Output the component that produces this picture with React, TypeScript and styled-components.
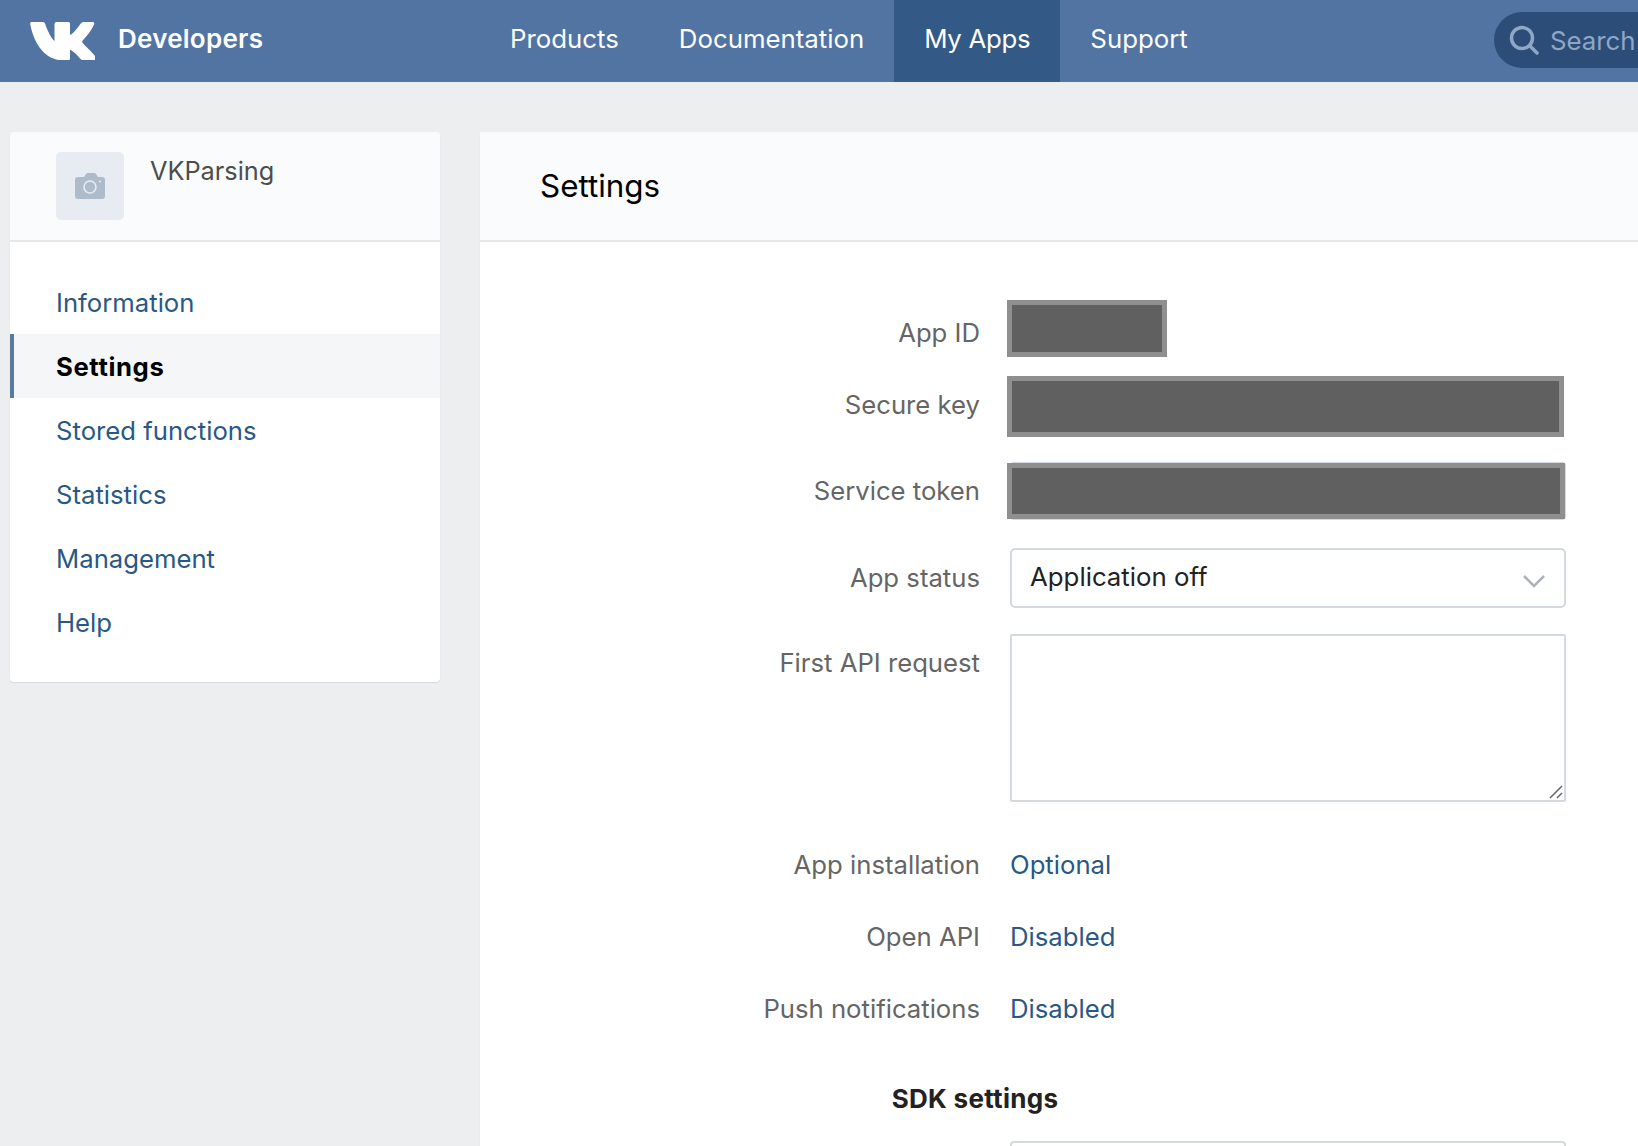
import React from "react";
import styled, { createGlobalStyle } from "styled-components";

const GlobalStyle = createGlobalStyle`
  html, body {
    margin: 0;
    padding: 0;
    height: 1146px;
    overflow: hidden;
    background: #edeef0;
    font-family: "Inter", "Liberation Sans", sans-serif;
  }
`;

const menuItems = ["Information", "Settings", "Stored functions", "Statistics", "Management", "Help"];
const navItems = ["Products", "Documentation", "My Apps", "Support"];

const App = () => {
  return (
    <Page>
      <GlobalStyle />
      <TopBar>
        <Brand>
          <svg width="65" height="38" viewBox="0 0 65 38" fill="#ffffff">
            <path d="M1.500 0h11.500q1.500 0 2 1.500c3 9 7 15.500 9.500 17.500V2q0-2 2-2h12q1.500 0 1.500 1.500V13c2.500-.5 8-7.500 10.800-11.500q1-1.500 2.700-1.500h9.200q2 0 1.500 2c-1.500 5-9 14-11.500 16.500q-1 1.200 0 2.500c2 2.500 10 9.500 13 14q1.500 3-1.500 3.500H54q-2 0-3.500-1.500c-3-3.500-7-7.800-10.500-9.500v9q0 1.800-2 2h-5C15 38 4 22 .3 2.500 0 1 .5 0 1.500 0z" />
          </svg>
          <BrandName>Developers</BrandName>
        </Brand>
        {navItems.map((item) => (
          <NavItem key={item} $active={item === "My Apps"}>
            {item}
          </NavItem>
        ))}
        <SearchBox>
          <svg width="30" height="30" viewBox="0 0 30 30" fill="none" stroke="#8fa7c6" strokeWidth="3.500" strokeLinecap="round">
            <circle cx="13" cy="13" r="10.500" />
            <path d="M21 21l7 7" />
          </svg>
          <span>Search</span>
        </SearchBox>
      </TopBar>

      <Content>
        <Sidebar>
          <AppHead>
            <Avatar>
              <svg width="30" height="26" viewBox="0 0 30 26">
                <path
                  fill="#aebbca"
                  d="M3 4h6l2-3q.5-1 2-1h6q1.500 0 2 1l2 3h4q3 0 3 3v16q0 3-3 3H3q-3 0-3-3V7q0-3 3-3z"
                />
                <circle cx="15" cy="14" r="6" fill="none" stroke="#e7ecf2" strokeWidth="1.600" />
                <circle cx="25" cy="8.500" r="1" fill="#e7ecf2" />
              </svg>
            </Avatar>
            <AppName>VKParsing</AppName>
          </AppHead>
          <Menu>
            {menuItems.map((item) => (
              <MenuItem key={item} $active={item === "Settings"}>
                {item}
              </MenuItem>
            ))}
          </Menu>
        </Sidebar>

        <Panel>
          <PanelHead>Settings</PanelHead>
          <Form>
            <Row $height={30}>
              <Label>App ID</Label>
              <Field>
                <Redacted $top={-18} $width={160} $height={57} />
              </Field>
            </Row>
            <Row>
              <Label>Secure key</Label>
              <Field>
                <Redacted $top={0} $width={557} $height={61} />
              </Field>
            </Row>
            <Row>
              <Label>Service token</Label>
              <Field>
                <Input />
                <Redacted $top={1} $width={558} $height={56} />
              </Field>
            </Row>
            <Row>
              <Label>App status</Label>
              <Field>
                <SelectBox>
                  Application off
                  <Chevron width="24" height="14" viewBox="0 0 24 14" fill="none" stroke="#aeb3b9" strokeWidth="2.500">
                    <path d="M2 2l10 10L22 2" />
                  </Chevron>
                </SelectBox>
              </Field>
            </Row>
            <Row $height={168} $after={41} $top>
              <Label $tall>First API request</Label>
              <Field>
                <TextArea readOnly />
                <Grip width="14" height="14" viewBox="0 0 14 14" stroke="#666" strokeWidth="1.500">
                  <path d="M1 13L13 1M8 13l5-5" />
                </Grip>
              </Field>
            </Row>
            <Row $height={44}>
              <Label>App installation</Label>
              <ValueLink>Optional</ValueLink>
            </Row>
            <Row $height={44}>
              <Label>Open API</Label>
              <ValueLink>Disabled</ValueLink>
            </Row>
            <Row $height={44} $after={46}>
              <Label>Push notifications</Label>
              <ValueLink>Disabled</ValueLink>
            </Row>
            <SectionTitle>SDK settings</SectionTitle>
            <Row>
              <span />
              <Field>
                <Input />
              </Field>
            </Row>
          </Form>
        </Panel>
      </Content>
    </Page>
  );
};

export default App;

const Page = styled.div`
  width: 1638px;
  height: 1146px;
  overflow: hidden;
`;

const TopBar = styled.header`
  display: flex;
  align-items: stretch;
  height: 82px;
  background-color: #5274a3;
`;

const Brand = styled.div`
  display: flex;
  align-items: center;
  gap: 23px;
  width: 480px;
  padding-left: 30px;
  box-sizing: border-box;
`;

const BrandName = styled.span`
  font-size: 26px;
  font-weight: 600;
  letter-spacing: 0.25px;
  color: #ffffff;
  margin-bottom: 5px;
`;

const NavItem = styled.div<{ $active?: boolean }>`
  display: flex;
  align-items: center;
  padding: 0 30px 6px;
  font-size: 25.800px;
  letter-spacing: ${(p) => (p.$active ? "-0.3px" : "0")};
  color: #ffffff;
  background-color: ${(p) => (p.$active ? "#335a87" : "transparent")};
`;

const SearchBox = styled.div`
  display: flex;
  align-items: center;
  gap: 11px;
  box-sizing: border-box;
  width: 144px;
  height: 56px;
  margin: 12px 0 0 auto;
  padding-left: 15px;
  border-radius: 28px 0 0 28px;
  background-color: #2b4d78;
  color: #8fa7c6;
  font-size: 25.800px;
  white-space: nowrap;
  overflow: hidden;
  flex-shrink: 0;

  svg {
    flex-shrink: 0;
  }
`;

const Content = styled.div`
  display: flex;
  align-items: flex-start;
  gap: 40px;
  padding: 50px 0 0 10px;
`;

const Sidebar = styled.aside`
  width: 430px;
  flex-shrink: 0;
  background-color: #ffffff;
  border-radius: 4px;
  box-shadow: 0 1px 1px #d7d8db, 0 0 1px #e3e4e8;
  overflow: hidden;
`;

const AppHead = styled.div`
  display: flex;
  gap: 26px;
  height: 110px;
  padding: 20px 0 0 46px;
  box-sizing: border-box;
  background-color: #fafbfc;
  border-bottom: 2px solid #e7e8ec;
`;

const Avatar = styled.div`
  display: flex;
  align-items: center;
  justify-content: center;
  width: 68px;
  height: 68px;
  border-radius: 5px;
  background-color: #e7ecf2;
`;

const AppName = styled.div`
  font-size: 25.300px;
  line-height: 38px;
  color: #4d4d4d;
`;

const Menu = styled.nav`
  display: flex;
  flex-direction: column;
  padding: 28px 0 28px;
`;

const MenuItem = styled.div<{ $active?: boolean }>`
  display: flex;
  align-items: center;
  height: 64px;
  padding-left: ${(p) => (p.$active ? "42px" : "46px")};
  font-size: 25.700px;
  font-weight: ${(p) => (p.$active ? 700 : 400)};
  letter-spacing: ${(p) => (p.$active ? "0.6px" : "0")};
  color: ${(p) => (p.$active ? "#000000" : "#2a5885")};
  background-color: ${(p) => (p.$active ? "#f5f6f8" : "transparent")};
  border-left: ${(p) => (p.$active ? "4px solid #5b7aa3" : "none")};
`;

const Panel = styled.main`
  flex: 1;
  min-height: 1100px;
  background-color: #ffffff;
  border-radius: 4px 0 0 0;
  box-shadow: 0 1px 1px #d7d8db, 0 0 1px #e3e4e8;
`;

const PanelHead = styled.div`
  display: flex;
  align-items: center;
  height: 110px;
  padding-left: 60px;
  box-sizing: border-box;
  font-size: 31.400px;
  color: #000000;
  background-color: #fafbfc;
  border-bottom: 2px solid #e7e8ec;
`;

const Form = styled.div`
  padding-top: 76px;
`;

const Row = styled.div<{ $height?: number; $after?: number; $top?: boolean }>`
  display: grid;
  grid-template-columns: 500px 556px;
  column-gap: 30px;
  align-items: ${(p) => (p.$top ? "start" : "center")};
  height: ${(p) => p.$height ?? 58}px;
  margin-bottom: ${(p) => p.$after ?? 28}px;
`;

const Label = styled.div<{ $tall?: boolean }>`
  font-size: 25.700px;
  line-height: ${(p) => (p.$tall ? "58px" : "30px")};
  color: #656565;
  text-align: right;
`;

const Field = styled.div`
  position: relative;
  height: 100%;
`;

const Input = styled.div`
  height: 100%;
  box-sizing: border-box;
  background-color: #ffffff;
  border: 2px solid #d3d9de;
  border-radius: 4px;
`;

const Redacted = styled.div<{ $top: number; $width: number; $height: number }>`
  position: absolute;
  left: -3px;
  top: ${(p) => p.$top}px;
  width: ${(p) => p.$width}px;
  height: ${(p) => p.$height}px;
  box-sizing: border-box;
  background-color: #606060;
  border: 5px solid #8f8f8f;
`;

const SelectBox = styled.div`
  display: flex;
  align-items: center;
  justify-content: space-between;
  height: 60px;
  box-sizing: border-box;
  padding: 0 18px 3px;
  font-size: 25.800px;
  color: #222222;
  background-color: #ffffff;
  border: 2px solid #d3d9de;
  border-radius: 5px;
`;

const Chevron = styled.svg`
  margin-top: 8px;
`;

const TextArea = styled.textarea`
  display: block;
  width: 100%;
  height: 100%;
  box-sizing: border-box;
  margin: 0;
  padding: 0;
  background-color: #ffffff;
  border: 2px solid #d3d9de;
  border-radius: 2px;
  outline: none;
  resize: none;
`;

const Grip = styled.svg`
  position: absolute;
  right: 3px;
  bottom: 3px;
`;

const ValueLink = styled.div`
  font-size: 25.700px;
  line-height: 30px;
  color: #2a5885;
`;

const SectionTitle = styled.div`
  width: 990px;
  height: 44px;
  line-height: 44px;
  text-align: center;
  font-size: 26px;
  font-weight: 700;
  letter-spacing: 0.3px;
  color: #222222;
  margin-bottom: 20px;
`;
